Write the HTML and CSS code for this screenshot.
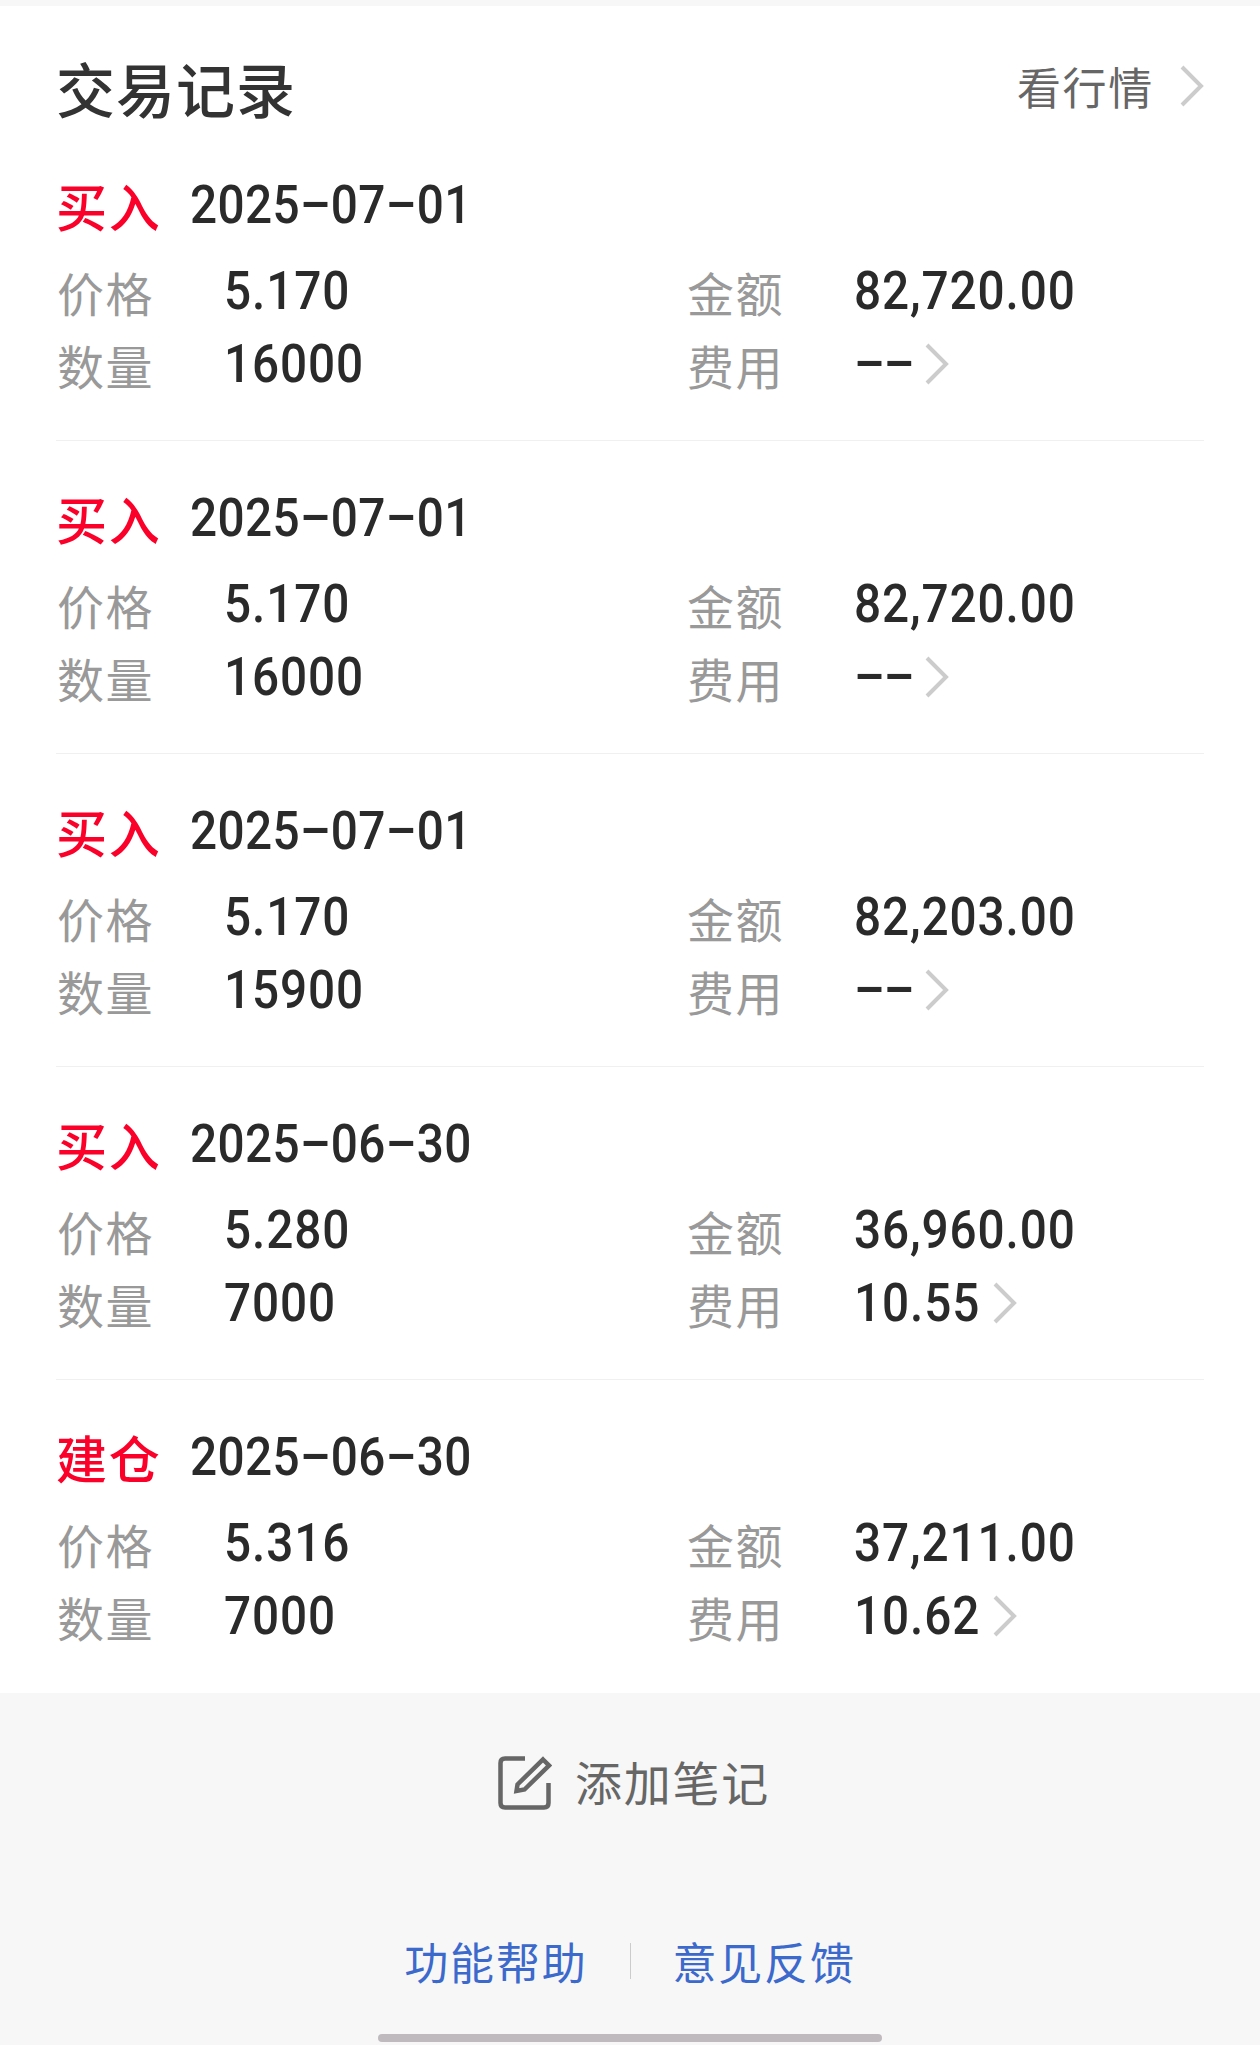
FILE: index.html
```html
<!DOCTYPE html>
<html lang="zh-CN">
<head>
    <meta charset="UTF-8">
    <title>交易记录</title>
    <link rel="stylesheet" href="styles.css">
</head>
<body>
    <div class="records">
        <div class="header">
            <div class="title">交易记录</div>
            <div class="market-link">
                <span>看行情</span>
                <svg class="arrow" viewBox="0 0 24 42"><path d="M2 2 L21 21 L2 40"/></svg>
            </div>
        </div>

        <div class="record">
            <div class="record-head"><span class="type">买入</span><span class="num date">2025–07–01</span></div>
            <div class="row">
                <div class="cell"><span class="label">价格</span><span class="num">5.170</span></div>
                <div class="cell"><span class="label">金额</span><span class="num">82,720.00</span></div>
            </div>
            <div class="row">
                <div class="cell"><span class="label">数量</span><span class="num">16000</span></div>
                <div class="cell"><span class="label">费用</span><span class="num empty">––</span><svg class="arrow" viewBox="0 0 24 42"><path d="M2 2 L21 21 L2 40"/></svg></div>
            </div>
        </div>

        <div class="record">
            <div class="record-head"><span class="type">买入</span><span class="num date">2025–07–01</span></div>
            <div class="row">
                <div class="cell"><span class="label">价格</span><span class="num">5.170</span></div>
                <div class="cell"><span class="label">金额</span><span class="num">82,720.00</span></div>
            </div>
            <div class="row">
                <div class="cell"><span class="label">数量</span><span class="num">16000</span></div>
                <div class="cell"><span class="label">费用</span><span class="num empty">––</span><svg class="arrow" viewBox="0 0 24 42"><path d="M2 2 L21 21 L2 40"/></svg></div>
            </div>
        </div>

        <div class="record">
            <div class="record-head"><span class="type">买入</span><span class="num date">2025–07–01</span></div>
            <div class="row">
                <div class="cell"><span class="label">价格</span><span class="num">5.170</span></div>
                <div class="cell"><span class="label">金额</span><span class="num">82,203.00</span></div>
            </div>
            <div class="row">
                <div class="cell"><span class="label">数量</span><span class="num">15900</span></div>
                <div class="cell"><span class="label">费用</span><span class="num empty">––</span><svg class="arrow" viewBox="0 0 24 42"><path d="M2 2 L21 21 L2 40"/></svg></div>
            </div>
        </div>

        <div class="record">
            <div class="record-head"><span class="type">买入</span><span class="num date">2025–06–30</span></div>
            <div class="row">
                <div class="cell"><span class="label">价格</span><span class="num">5.280</span></div>
                <div class="cell"><span class="label">金额</span><span class="num">36,960.00</span></div>
            </div>
            <div class="row">
                <div class="cell"><span class="label">数量</span><span class="num">7000</span></div>
                <div class="cell"><span class="label">费用</span><span class="num">10.55</span><svg class="arrow" viewBox="0 0 24 42"><path d="M2 2 L21 21 L2 40"/></svg></div>
            </div>
        </div>

        <div class="record">
            <div class="record-head"><span class="type">建仓</span><span class="num date">2025–06–30</span></div>
            <div class="row">
                <div class="cell"><span class="label">价格</span><span class="num">5.316</span></div>
                <div class="cell"><span class="label">金额</span><span class="num">37,211.00</span></div>
            </div>
            <div class="row">
                <div class="cell"><span class="label">数量</span><span class="num">7000</span></div>
                <div class="cell"><span class="label">费用</span><span class="num">10.62</span><svg class="arrow" viewBox="0 0 24 42"><path d="M2 2 L21 21 L2 40"/></svg></div>
            </div>
        </div>
    </div>

    <div class="footer">
        <div class="add-note">
            <svg class="note-icon" viewBox="0 0 54 54">
                <path d="M27 2.5 H7 Q2.5 2.5 2.5 7 V47 Q2.5 51.5 7 51.5 H46 Q50.5 51.5 50.5 47 V27"/>
                <path d="M45 3.500 L51 9.500 L26.500 33.500 L18.500 35 L19.500 28.500 Z"/>
            </svg>
            <span class="note-text">添加笔记</span>
        </div>
        <div class="links">
            <a class="link">功能帮助</a>
            <span class="divider"></span>
            <a class="link">意见反馈</a>
        </div>
        <div class="home-bar"></div>
    </div>
</body>
</html>
```
FILE: styles.css
```css
body {
    margin: 0;
    background-color: #f7f7f7;
    color: #2a2a2a;
    font-family: "Noto Sans CJK SC", sans-serif;
}

.records {
    margin-top: 6px;
    padding: 0 56px;
    background-color: #ffffff;
}

.header {
    display: flex;
    justify-content: space-between;
    height: 122px;
}

.title {
    padding: 42px 0 0 0;
    font-size: 59px;
    line-height: 80px;
    font-weight: 500;
    letter-spacing: 1px;
    color: #333333;
}

.market-link {
    display: flex;
    align-items: center;
    height: 159px;
    gap: 26px;
    font-size: 44px;
    letter-spacing: 1.7px;
    color: #666666;
}

.arrow {
    width: 24px;
    height: 42px;
    fill: none;
    stroke: #cccccc;
    stroke-width: 4;
}

.record {
    box-sizing: border-box;
    height: 313px;
    padding-top: 39px;
    border-bottom: 1px solid #f0f0f0;
}

.record:last-child {
    border-bottom: none;
}

.record-head {
    display: flex;
    height: 76px;
    line-height: 76px;
    margin-bottom: 11px;
}

.type {
    width: 134px;
    box-sizing: border-box;
    font-size: 51px;
    font-weight: 500;
    letter-spacing: 1.7px;
    color: #fb0029;
}

.num {
    font-family: Roboto, sans-serif;
    font-size: 53px;
    font-weight: 500;
    letter-spacing: 1px;
    transform: scaleX(0.9);
    transform-origin: left;
}

.date {
    letter-spacing: 0.4px;
}

.empty {
    letter-spacing: -1px;
}

.row {
    display: flex;
    height: 73px;
    line-height: 73px;
}

.cell {
    display: flex;
    flex: none;
    align-items: center;
    width: 630px;
}

.cell:last-child {
    width: 518px;
}

.cell .num {
    padding-top: 1px;
}

.cell .arrow {
    margin-left: -1px;
}

.cell .empty + .arrow {
    margin-left: 5px;
}

.label {
    width: 168px;
    padding: 1px 0 0 1px;
    box-sizing: border-box;
    font-size: 47px;
    letter-spacing: 1.5px;
    color: #999999;
}

.footer {
    display: flex;
    flex-direction: column;
    align-items: center;
    height: 353px;
}

.add-note {
    display: flex;
    align-items: center;
    height: 180px;
    padding-left: 8px;
    gap: 23px;
    font-size: 47px;
    letter-spacing: 1.8px;
    color: #666666;
}

.note-text {
    margin-top: -6px;
}

.note-icon {
    width: 54px;
    height: 54px;
    fill: none;
    stroke: #666666;
    stroke-width: 4.5;
}

.links {
    display: flex;
    align-items: center;
    height: 70px;
    margin-top: 53px;
    gap: 42px;
}

.link {
    font-size: 44px;
    letter-spacing: 1.8px;
    color: #3c69cc;
}

.divider {
    width: 1px;
    height: 36px;
    background-color: #cccccc;
}

.home-bar {
    width: 504px;
    height: 8px;
    margin-top: 38px;
    border-radius: 4px;
    background-color: #bfbabe;
}
```
